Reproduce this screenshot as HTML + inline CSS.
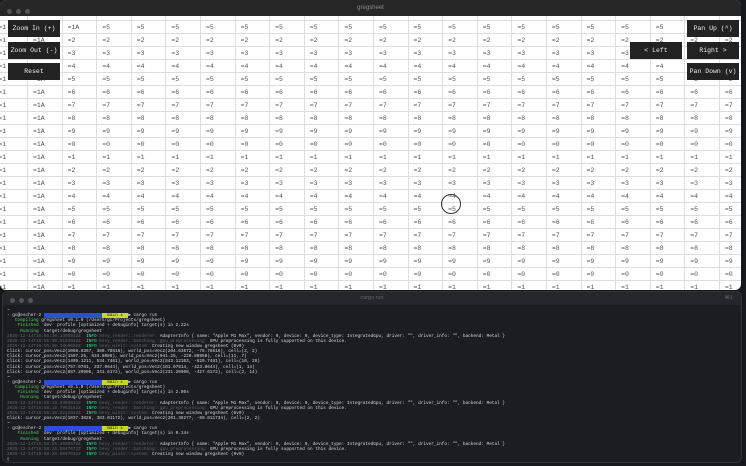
<!DOCTYPE html>
<html><head><meta charset="utf-8"><style>
*{margin:0;padding:0;box-sizing:border-box}
body{width:746px;height:466px;background:#15171c;overflow:hidden;position:relative;font-family:"Liberation Mono",monospace}
#w1{position:absolute;left:0;top:0;width:741px;height:290px;background:#fff;overflow:hidden;border-radius:6px}
#t1{position:absolute;left:0;top:0;width:741px;height:16px;background:#262626;z-index:3;color:#8a8a8a;font:6px "Liberation Sans",sans-serif;text-align:center;line-height:16px}
.dots{position:absolute;left:7px;top:5px}
.dots b{display:inline-block;width:5px;height:5px;border-radius:50%;background:#555;margin-right:4px}
#grid{position:absolute;left:-6.6px;top:8px;width:800px}
.r{height:13px;white-space:nowrap;border-bottom:1px solid #ddd}
.r i{display:inline-block;width:34.6px;height:13px;border-right:1px solid #ddd;font-style:normal;font-size:6.5px;color:#555;line-height:13px;padding-left:5px;vertical-align:top}
.btn{position:absolute;background:#222;color:#eee;font-size:6.5px;text-align:center;line-height:17px;height:17px;width:52px;z-index:4}
#cur{position:absolute;left:441px;top:194px;width:20px;height:20px;border:1.5px solid #333;border-radius:50%;z-index:4}
#w2{position:absolute;left:2px;top:291px;width:740px;height:172px;background:#1b1d23;border-radius:6px;overflow:hidden;border:1px solid #333}
#t2{height:13px;background:#25272d;color:#666;font:5.5px "Liberation Sans",sans-serif;text-align:center;line-height:13px;position:relative}
#t2 .dots{top:4px}
#term{padding:3px 0 0 4px;font-size:4.4px;line-height:5.14px;color:#d8d8d8;white-space:pre}
.g{color:#5c5}.d{color:#666}.bl{background:#2b4fd6;color:#2b4fd6}.yl{background:#c8d82a;color:#222}.gr{color:#2e8}
</style></head><body>
<div id="w1">
<div id="t1"><div class="dots"><b></b><b></b><b></b></div>gregsheet</div>
<div id="grid">
<div class="r"><i>=1</i><i>=1A</i><i>=1A</i><i>=1A</i><i>=1A</i><i>=1A</i><i>=1A</i><i>=1A</i><i>=1A</i><i>=1A</i><i>=1A</i><i>=1A</i><i>=1A</i><i>=1A</i><i>=1A</i><i>=1A</i><i>=1A</i><i>=1A</i><i>=1A</i><i>=1A</i><i>=1A</i><i>=1A</i></div>
<div class="r"><i>=1</i><i>=1A</i><i>=1A</i><i>=5</i><i>=5</i><i>=5</i><i>=5</i><i>=5</i><i>=5</i><i>=5</i><i>=5</i><i>=5</i><i>=5</i><i>=5</i><i>=5</i><i>=5</i><i>=5</i><i>=5</i><i>=5</i><i>=5</i><i>=5</i><i>=9</i></div>
<div class="r"><i>=1</i><i>=1A</i><i>=2</i><i>=2</i><i>=2</i><i>=2</i><i>=2</i><i>=2</i><i>=2</i><i>=2</i><i>=2</i><i>=2</i><i>=2</i><i>=2</i><i>=2</i><i>=2</i><i>=2</i><i>=2</i><i>=2</i><i>=2</i><i>=2</i><i>=2</i></div>
<div class="r"><i>=1</i><i>=1A</i><i>=3</i><i>=3</i><i>=3</i><i>=3</i><i>=3</i><i>=3</i><i>=3</i><i>=3</i><i>=3</i><i>=3</i><i>=3</i><i>=3</i><i>=3</i><i>=3</i><i>=3</i><i>=3</i><i>=3</i><i>=3</i><i>=3</i><i>=3</i></div>
<div class="r"><i>=1</i><i>=1A</i><i>=4</i><i>=4</i><i>=4</i><i>=4</i><i>=4</i><i>=4</i><i>=4</i><i>=4</i><i>=4</i><i>=4</i><i>=4</i><i>=4</i><i>=4</i><i>=4</i><i>=4</i><i>=4</i><i>=4</i><i>=4</i><i>=4</i><i>=4</i></div>
<div class="r"><i>=1</i><i>=1A</i><i>=5</i><i>=5</i><i>=5</i><i>=5</i><i>=5</i><i>=5</i><i>=5</i><i>=5</i><i>=5</i><i>=5</i><i>=5</i><i>=5</i><i>=5</i><i>=5</i><i>=5</i><i>=5</i><i>=5</i><i>=5</i><i>=5</i><i>=5</i></div>
<div class="r"><i>=1</i><i>=1A</i><i>=6</i><i>=6</i><i>=6</i><i>=6</i><i>=6</i><i>=6</i><i>=6</i><i>=6</i><i>=6</i><i>=6</i><i>=6</i><i>=6</i><i>=6</i><i>=6</i><i>=6</i><i>=6</i><i>=6</i><i>=6</i><i>=6</i><i>=6</i></div>
<div class="r"><i>=1</i><i>=1A</i><i>=7</i><i>=7</i><i>=7</i><i>=7</i><i>=7</i><i>=7</i><i>=7</i><i>=7</i><i>=7</i><i>=7</i><i>=7</i><i>=7</i><i>=7</i><i>=7</i><i>=7</i><i>=7</i><i>=7</i><i>=7</i><i>=7</i><i>=7</i></div>
<div class="r"><i>=1</i><i>=1A</i><i>=8</i><i>=8</i><i>=8</i><i>=8</i><i>=8</i><i>=8</i><i>=8</i><i>=8</i><i>=8</i><i>=8</i><i>=8</i><i>=8</i><i>=8</i><i>=8</i><i>=8</i><i>=8</i><i>=8</i><i>=8</i><i>=8</i><i>=8</i></div>
<div class="r"><i>=1</i><i>=1A</i><i>=9</i><i>=9</i><i>=9</i><i>=9</i><i>=9</i><i>=9</i><i>=9</i><i>=9</i><i>=9</i><i>=9</i><i>=9</i><i>=9</i><i>=9</i><i>=9</i><i>=9</i><i>=9</i><i>=9</i><i>=9</i><i>=9</i><i>=9</i></div>
<div class="r"><i>=1</i><i>=1A</i><i>=0</i><i>=0</i><i>=0</i><i>=0</i><i>=0</i><i>=0</i><i>=0</i><i>=0</i><i>=0</i><i>=0</i><i>=0</i><i>=0</i><i>=0</i><i>=0</i><i>=0</i><i>=0</i><i>=0</i><i>=0</i><i>=0</i><i>=0</i></div>
<div class="r"><i>=1</i><i>=1A</i><i>=1</i><i>=1</i><i>=1</i><i>=1</i><i>=1</i><i>=1</i><i>=1</i><i>=1</i><i>=1</i><i>=1</i><i>=1</i><i>=1</i><i>=1</i><i>=1</i><i>=1</i><i>=1</i><i>=1</i><i>=1</i><i>=1</i><i>=1</i></div>
<div class="r"><i>=1</i><i>=1A</i><i>=2</i><i>=2</i><i>=2</i><i>=2</i><i>=2</i><i>=2</i><i>=2</i><i>=2</i><i>=2</i><i>=2</i><i>=2</i><i>=2</i><i>=2</i><i>=2</i><i>=2</i><i>=2</i><i>=2</i><i>=2</i><i>=2</i><i>=2</i></div>
<div class="r"><i>=1</i><i>=1A</i><i>=3</i><i>=3</i><i>=3</i><i>=3</i><i>=3</i><i>=3</i><i>=3</i><i>=3</i><i>=3</i><i>=3</i><i>=3</i><i>=3</i><i>=3</i><i>=3</i><i>=3</i><i>=3</i><i>=3</i><i>=3</i><i>=3</i><i>=3</i></div>
<div class="r"><i>=1</i><i>=1A</i><i>=4</i><i>=4</i><i>=4</i><i>=4</i><i>=4</i><i>=4</i><i>=4</i><i>=4</i><i>=4</i><i>=4</i><i>=4</i><i>=4</i><i>=4</i><i>=4</i><i>=4</i><i>=4</i><i>=4</i><i>=4</i><i>=4</i><i>=4</i></div>
<div class="r"><i>=1</i><i>=1A</i><i>=5</i><i>=5</i><i>=5</i><i>=5</i><i>=5</i><i>=5</i><i>=5</i><i>=5</i><i>=5</i><i>=5</i><i>=5</i><i>=5</i><i>=5</i><i>=5</i><i>=5</i><i>=5</i><i>=5</i><i>=5</i><i>=5</i><i>=5</i></div>
<div class="r"><i>=1</i><i>=1A</i><i>=6</i><i>=6</i><i>=6</i><i>=6</i><i>=6</i><i>=6</i><i>=6</i><i>=6</i><i>=6</i><i>=6</i><i>=6</i><i>=6</i><i>=6</i><i>=6</i><i>=6</i><i>=6</i><i>=6</i><i>=6</i><i>=6</i><i>=6</i></div>
<div class="r"><i>=1</i><i>=1A</i><i>=7</i><i>=7</i><i>=7</i><i>=7</i><i>=7</i><i>=7</i><i>=7</i><i>=7</i><i>=7</i><i>=7</i><i>=7</i><i>=7</i><i>=7</i><i>=7</i><i>=7</i><i>=7</i><i>=7</i><i>=7</i><i>=7</i><i>=7</i></div>
<div class="r"><i>=1</i><i>=1A</i><i>=8</i><i>=8</i><i>=8</i><i>=8</i><i>=8</i><i>=8</i><i>=8</i><i>=8</i><i>=8</i><i>=8</i><i>=8</i><i>=8</i><i>=8</i><i>=8</i><i>=8</i><i>=8</i><i>=8</i><i>=8</i><i>=8</i><i>=8</i></div>
<div class="r"><i>=1</i><i>=1A</i><i>=9</i><i>=9</i><i>=9</i><i>=9</i><i>=9</i><i>=9</i><i>=9</i><i>=9</i><i>=9</i><i>=9</i><i>=9</i><i>=9</i><i>=9</i><i>=9</i><i>=9</i><i>=9</i><i>=9</i><i>=9</i><i>=9</i><i>=9</i></div>
<div class="r"><i>=1</i><i>=1A</i><i>=0</i><i>=0</i><i>=0</i><i>=0</i><i>=0</i><i>=0</i><i>=0</i><i>=0</i><i>=0</i><i>=0</i><i>=0</i><i>=0</i><i>=0</i><i>=0</i><i>=0</i><i>=0</i><i>=0</i><i>=0</i><i>=0</i><i>=0</i></div>
<div class="r"><i>=1</i><i>=1A</i><i>=1</i><i>=1</i><i>=1</i><i>=1</i><i>=1</i><i>=1</i><i>=1</i><i>=1</i><i>=1</i><i>=1</i><i>=1</i><i>=1</i><i>=1</i><i>=1</i><i>=1</i><i>=1</i><i>=1</i><i>=1</i><i>=1</i><i>=1</i></div>
</div>
<div class="btn" style="left:8px;top:20px">Zoom In (+)</div>
<div class="btn" style="left:8px;top:42px">Zoom Out (-)</div>
<div class="btn" style="left:8px;top:63px">Reset</div>
<div class="btn" style="left:687px;top:20px">Pan Up (^)</div>
<div class="btn" style="left:630px;top:42px">&lt; Left</div>
<div class="btn" style="left:687px;top:42px">Right &gt;</div>
<div class="btn" style="left:687px;top:63px">Pan Down (v)</div>
<div id="cur"></div>
</div>
<div id="w2">
<div id="t2"><div class="dots"><b></b><b></b><b></b></div>cargo run<span style="position:absolute;right:8px">⌘1</span></div>
<div id="term">~
<span class="d">•</span> gc@escher-2 <span class="bl">~/Projects/gregsheet ▶</span><span class="yl">  main ±  </span>▶ cargo run
   <span class="g">Compiling</span> gregsheet v0.1.0 (/Users/gc/Projects/gregsheet)
    <span class="g">Finished</span> `dev` profile [optimized + debuginfo] target(s) in 2.22s
     <span class="g">Running</span> `target/debug/gregsheet`
<span class="d">2025-12-14T16:55:30.1495932Z</span>  <span class="gr">INFO</span> <span class="d">bevy_render::renderer:</span> AdapterInfo { name: "Apple M1 Max", vendor: 0, device: 0, device_type: IntegratedGpu, driver: "", driver_info: "", backend: Metal }
<span class="d">2025-12-14T16:55:30.3163042Z</span>  <span class="gr">INFO</span> <span class="d">bevy_render::batching::gpu_preprocessing:</span> GPU preprocessing is fully supported on this device.
<span class="d">2025-12-14T16:55:30.3460032Z</span>  <span class="gr">INFO</span> <span class="d">bevy_winit::system:</span> Creating new window gregsheet (0v0)
Click: cursor_pos=Vec2(1068.6367, 389.78516), world_pos=Vec2(204.63672, -75.78516), cell=(2, 2)
Click: cursor_pos=Vec2(1597.25, 534.8086), world_pos=Vec2(941.25, -220.80858), cell=(11, 7)
Click: cursor_pos=Vec2(1499.1211, 534.7461), world_pos=Vec2(843.12103, -620.7461), cell=(10, 20)
Click: cursor_pos=Vec2(757.0781, 337.0644), world_pos=Vec2(101.07814, -423.0644), cell=(1, 14)
Click: cursor_pos=Vec2(887.20906, 341.6172), world_pos=Vec2(231.20908, -427.6172), cell=(2, 14)
~
<span class="d">•</span> gc@escher-2 <span class="bl">~/Projects/gregsheet ▶</span><span class="yl">  main ±  </span>▶ cargo run
   <span class="g">Compiling</span> gregsheet v0.1.0 (/Users/gc/Projects/gregsheet)
    <span class="g">Finished</span> `dev` profile [optimized + debuginfo] target(s) in 2.05s
     <span class="g">Running</span> `target/debug/gregsheet`
<span class="d">2025-12-14T16:58:18.6303032Z</span>  <span class="gr">INFO</span> <span class="d">bevy_render::renderer:</span> AdapterInfo { name: "Apple M1 Max", vendor: 0, device: 0, device_type: IntegratedGpu, driver: "", driver_info: "", backend: Metal }
<span class="d">2025-12-14T16:58:18.7953182Z</span>  <span class="gr">INFO</span> <span class="d">bevy_render::batching::gpu_preprocessing:</span> GPU preprocessing is fully supported on this device.
<span class="d">2025-12-14T16:58:18.8212942Z</span>  <span class="gr">INFO</span> <span class="d">bevy_winit::system:</span> Creating new window gregsheet (0v0)
Click: cursor_pos=Vec2(1037.3828, 383.01172), world_pos=Vec2(201.38277, -69.011734), cell=(2, 2)
~
<span class="d">•</span> gc@escher-2 <span class="bl">~/Projects/gregsheet ▶</span><span class="yl">  main ±  </span>▶ cargo run
    <span class="g">Finished</span> `dev` profile [optimized + debuginfo] target(s) in 0.14s
     <span class="g">Running</span> `target/debug/gregsheet`
<span class="d">2025-12-14T16:58:26.4609672Z</span>  <span class="gr">INFO</span> <span class="d">bevy_render::renderer:</span> AdapterInfo { name: "Apple M1 Max", vendor: 0, device: 0, device_type: IntegratedGpu, driver: "", driver_info: "", backend: Metal }
<span class="d">2025-12-14T16:58:26.5847672Z</span>  <span class="gr">INFO</span> <span class="d">bevy_render::batching::gpu_preprocessing:</span> GPU preprocessing is fully supported on this device.
<span class="d">2025-12-14T16:58:26.6097032Z</span>  <span class="gr">INFO</span> <span class="d">bevy_winit::system:</span> Creating new window gregsheet (0v0)
▯</div>
</div>
</body></html>
